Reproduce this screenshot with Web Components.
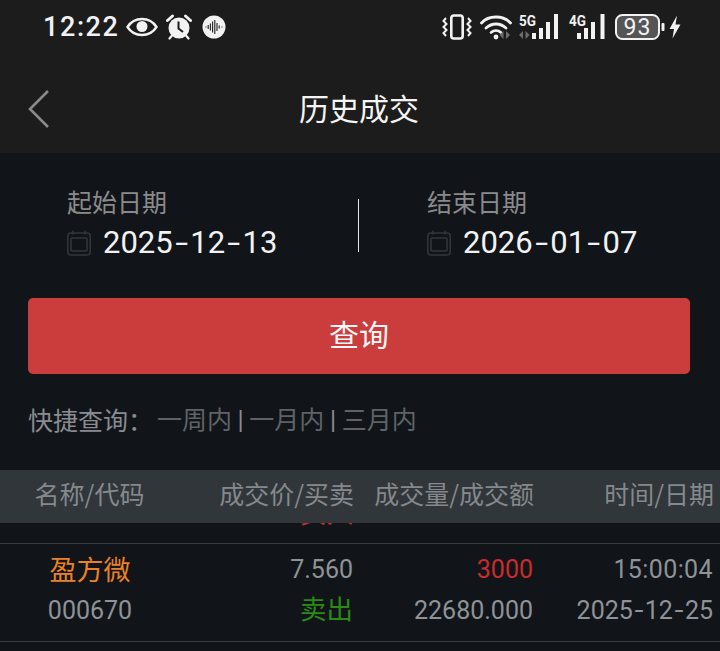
<!DOCTYPE html>
<html lang="zh">
<head>
<meta charset="utf-8">
<title>历史成交</title>
<style>
  html, body { margin: 0; height: 100%; background: #111519; overflow: hidden; }
  body { font-family: Roboto, "Noto Sans CJK SC", sans-serif; }
</style>
</head>
<body>
<history-page>
  <status-bar slot="status"></status-bar>
  <nav-bar slot="nav">历史成交</nav-bar>
  <date-range slot="range"></date-range>
  <query-button slot="query">查询</query-button>
  <quick-range slot="quick"></quick-range>
  <trade-table slot="table">
    <trade-row cut side="买入" side-color="#c92c2c"></trade-row>
    <trade-row name="盈方微" code="000670" price="7.560" side="卖出" side-color="#2b8a16"
      volume="3000" amount="22680.000" time="15:00:04" date="2025-12-25"></trade-row>
  </trade-table>
</history-page>

<script>
// dates use a wide dash in the app's font, so the hyphen gets its own box
const dashed = (text) => text.replace(/-/g, '<span class="dash">-</span>');

class HistoryPage extends HTMLElement {
  constructor() {
    super();
    this.attachShadow({ mode: "open" }).innerHTML = `
      <style>
        :host { display: flex; flex-direction: column; height: 651px; background: #111519; }
        header { background: #1c1c1c; height: 153px; display: flex; flex-direction: column; }
        main { flex: 1; min-height: 0; display: flex; flex-direction: column; }
      </style>
      <header><slot name="status"></slot><slot name="nav"></slot></header>
      <main>
        <slot name="range"></slot>
        <slot name="query"></slot>
        <slot name="quick"></slot>
        <slot name="table"></slot>
      </main>`;
  }
}

class StatusBar extends HTMLElement {
  constructor() {
    super();
    this.attachShadow({ mode: "open" }).innerHTML = `
      <style>
        :host { display: flex; align-items: center; height: 54px; padding: 0 39px 0 43px; color: #f2f2f2; }
        .time { font: 500 27px/1 Roboto, sans-serif; letter-spacing: 1.6px; margin-right: 6px; }
        .left, .right { display: flex; align-items: center; }
        .right { margin-left: auto; }
        svg { display: block; flex: none; }
      </style>
      <div class="left">
        <span class="time">12:22</span>
        <svg width="32" height="20" viewBox="0 0 32 20" style="margin-right:8px">
          <path d="M1.5 10C5 4.500 10 2 16 2s11 2.500 14.500 8C27 15.500 22 18 16 18S5 15.500 1.500 10z" fill="none" stroke="#f2f2f2" stroke-width="2.400"/>
          <circle cx="16" cy="9.500" r="5.500" fill="#f2f2f2"/>
        </svg>
        <svg width="26" height="26" viewBox="0 0 26 26" style="margin-right:10px">
          <circle cx="13" cy="14" r="10.500" fill="#f2f2f2"/>
          <path d="M12.500 7.500v7l4.500 3.500" fill="none" stroke="#1c1c1c" stroke-width="2"/>
          <path d="M1.500 6.500 6.500 2M24.500 6.500 19.500 2" stroke="#f2f2f2" stroke-width="3" stroke-linecap="round"/>
          <path d="M6 21.500 3.500 24.500M20 21.500 22.500 24.500" stroke="#f2f2f2" stroke-width="2.200" stroke-linecap="round"/>
        </svg>
        <svg width="24" height="24" viewBox="0 0 24 24">
          <circle cx="12" cy="12" r="11.500" fill="#f2f2f2"/>
          <path d="M3.500 12h1M6.200 10v4M8.400 8.500v7M10.600 6.500v11M12.800 5v14M15 8v8M17.200 10.500v3M19.500 12h1" stroke="#1c1c1c" stroke-width="1.100"/>
        </svg>
      </div>
      <div class="right">
        <svg width="30" height="26" viewBox="0 0 30 26" style="margin-right:8px">
          <rect x="9.300" y="1.500" width="11.400" height="23" rx="2.500" fill="none" stroke="#f2f2f2" stroke-width="2.600"/>
          <path d="M4 4 1.500 7 4.500 10 1.500 13 4.500 16 1.500 19 4 22M26 4 28.500 7 25.500 10 28.500 13 25.500 16 28.500 19 26 22" fill="none" stroke="#f2f2f2" stroke-width="2"/>
        </svg>
        <svg width="33" height="26" viewBox="0 0 33 26" style="margin-right:6px">
          <path d="M1.500 9C5 5 10 3 16 3s11 2 14.500 6" fill="none" stroke="#f2f2f2" stroke-width="2.800" stroke-linecap="round"/>
          <path d="M6 14c3-2.600 6.200-4 10-4s7 1.400 10 4" fill="none" stroke="#f2f2f2" stroke-width="2.800" stroke-linecap="round"/>
          <path d="M11 18.500c1.500-1.300 3-2 5-2s3.500.7 5 2" fill="none" stroke="#f2f2f2" stroke-width="2.600" stroke-linecap="round"/>
          <circle cx="16" cy="23" r="2.400" fill="#f2f2f2"/>
          <path d="M23.500 25v-8l-4 4zM26 17v8l4-4z" fill="#6d6d6d"/>
        </svg>
        <svg width="42" height="28" viewBox="0 0 42 28" style="margin-right:8px">
          <text x="0" y="13" font-family="Roboto, sans-serif" font-weight="700" font-size="15" fill="#f2f2f2" textLength="17" lengthAdjust="spacingAndGlyphs">5G</text>
          <path d="M4 26v-8l-4 4zM6.500 18v8l4-4z" fill="#6d6d6d"/>
          <rect x="13" y="20" width="4" height="6" fill="#f2f2f2"/>
          <rect x="20" y="15" width="4" height="11" fill="#f2f2f2"/>
          <rect x="27" y="9" width="4" height="17" fill="#f2f2f2"/>
          <rect x="35" y="1" width="4" height="25" fill="#f2f2f2"/>
        </svg>
        <svg width="37" height="28" viewBox="0 0 37 28" style="margin-right:9px">
          <text x="0" y="13" font-family="Roboto, sans-serif" font-weight="700" font-size="15" fill="#f2f2f2" textLength="17" lengthAdjust="spacingAndGlyphs">4G</text>
          <rect x="8" y="20" width="4" height="6" fill="#f2f2f2"/>
          <rect x="15" y="15" width="4" height="11" fill="#f2f2f2"/>
          <rect x="22" y="9" width="4" height="17" fill="#f2f2f2"/>
          <rect x="31.500" y="1" width="4" height="25" fill="#f2f2f2"/>
        </svg>
        <svg width="50" height="26" viewBox="0 0 50 26" style="margin-right:4px">
          <rect x="1" y="1" width="43" height="24" rx="6.500" fill="#555" stroke="#f2f2f2" stroke-width="2"/>
          <text x="22.500" y="20.500" text-anchor="middle" font-family="Roboto, sans-serif" font-size="23" letter-spacing="1" fill="#f2f2f2">93</text>
          <rect x="46.500" y="9" width="3" height="8" rx="1" fill="#f2f2f2"/>
        </svg>
        <svg width="12" height="24" viewBox="0 0 12 24">
          <path d="M8 .5 .5 14H5L3.500 23.500 11.500 9.500H6.500z" fill="#f2f2f2"/>
        </svg>
      </div>`;
  }
}

class NavBar extends HTMLElement {
  constructor() {
    super();
    this.attachShadow({ mode: "open" }).innerHTML = `
      <style>
        :host { display: grid; grid-template-columns: 1fr auto 1fr; align-items: center; flex: 1; padding-top: 10px; }
        svg { display: block; margin-left: 27px; }
        .title { font: 400 30px/1 "Noto Sans CJK SC", sans-serif; color: #f4f4f4; margin: 0 2px 4px 0; }
      </style>
      <svg width="23" height="40" viewBox="0 0 23 40"><path d="M21 2 3 20l18 18" fill="none" stroke="#8a8a8a" stroke-width="2.600"/></svg>
      <div class="title"><slot></slot></div>
      <span></span>`;
  }
}

class DateRange extends HTMLElement {
  constructor() {
    super();
    this.attachShadow({ mode: "open" }).innerHTML = `
      <style>
        :host { display: grid; grid-template-columns: 358px 1px 1fr; padding-top: 31px; height: 113px; box-sizing: border-box; }
        .line { background: #e8e8e8; height: 53px; margin-top: 15px; }
        date-field.a { margin-left: 67px; }
        date-field.b { margin-left: 68px; }
      </style>
      <date-field class="a" label="起始日期" value="2025-12-13"></date-field>
      <div class="line"></div>
      <date-field class="b" label="结束日期" value="2026-01-07"></date-field>`;
  }
}

class DateField extends HTMLElement {
  constructor() {
    super();
    this.attachShadow({ mode: "open" }).innerHTML = `
      <style>
        :host { display: block; }
        .label { font: 400 25px/34px "Noto Sans CJK SC", sans-serif; color: #8a8a8a; }
        .row { display: flex; align-items: center; gap: 12px; margin-top: 7px; height: 36px; }
        .value { font: 400 31px/36px Roboto, sans-serif; color: #f2f2f2; }
        .dash { display: inline-block; width: 17.500px; text-align: center; transform: scaleX(1.5); }
        svg { display: block; flex: none; }
      </style>
      <div class="label"></div>
      <div class="row">
        <svg width="24" height="26" viewBox="0 0 24 26">
          <rect x=".8" y="3" width="22.400" height="22" rx="3" fill="none" stroke="#33373c" stroke-width="1.500"/>
          <rect x="4" y="8" width="16" height="13" rx="1" fill="none" stroke="#33373c" stroke-width="1.500"/>
          <path d="M6 .5v4M18 .5v4" stroke="#33373c" stroke-width="1.500"/>
        </svg>
        <span class="value"></span>
      </div>`;
  }
  connectedCallback() {
    this.shadowRoot.querySelector(".label").textContent = this.getAttribute("label");
    this.shadowRoot.querySelector(".value").innerHTML = dashed(this.getAttribute("value"));
  }
}

class QueryButton extends HTMLElement {
  constructor() {
    super();
    this.attachShadow({ mode: "open" }).innerHTML = `
      <style>
        :host { display: block; margin: 32px 30px 0 28px; }
        button {
          display: block; width: 100%; height: 76px; border: 0; border-radius: 5px; padding: 0 0 7px;
          background: #cb3d3d; color: #f6f6f6; font: 400 30px/1 "Noto Sans CJK SC", sans-serif;
        }
      </style>
      <button><slot></slot></button>`;
  }
}

class QuickRange extends HTMLElement {
  constructor() {
    super();
    this.attachShadow({ mode: "open" }).innerHTML = `
      <style>
        :host { display: flex; align-items: center; height: 34px; margin: 28px 0 0 28px; font: 400 25px/34px "Noto Sans CJK SC", sans-serif; }
        .tag { color: #8a8c8f; width: 129px; }
        .links { color: #5f6367; }
        .sep { color: #8a8c8f; font-family: Roboto, sans-serif; }
      </style>
      <span class="tag">快捷查询：</span>
      <span class="links">一周内 <span class="sep">|</span> 一月内 <span class="sep">|</span> 三月内</span>`;
  }
}

class TradeTable extends HTMLElement {
  constructor() {
    super();
    this.attachShadow({ mode: "open" }).innerHTML = `
      <style>
        :host { display: flex; flex-direction: column; flex: 1; min-height: 0; margin-top: 34px; }
        .head {
          display: grid; grid-template-columns: 180px 174px 180px 180px; align-items: center;
          height: 53px; padding-bottom: 6px; box-sizing: border-box; background: #30363a; color: #85898c;
          font: 400 25px/1 "Noto Sans CJK SC", sans-serif; text-align: right; white-space: nowrap;
        }
        .head span:first-child { margin-left: -1px; text-align: center; }
        .body { flex: 1; min-height: 0; overflow: hidden; }
      </style>
      <div class="head"><span>名称/代码</span><span>成交价/买卖</span><span>成交量/成交额</span><span>时间/日期</span></div>
      <div class="body"><slot></slot></div>`;
  }
}

class TradeRow extends HTMLElement {
  constructor() {
    super();
    this.attachShadow({ mode: "open" }).innerHTML = `
      <style>
        :host {
          display: grid; grid-template-columns: 180px 173px 180px 180px; grid-template-rows: 41px 41px;
          align-content: start; padding-top: 5px; box-sizing: border-box; height: 98px;
          border-bottom: 1px solid #3a3d40;
          font: 400 25px/41px Roboto, "Noto Sans CJK SC", sans-serif; color: #8f9296; text-align: right;
        }
        :host([cut]) { margin-top: -77px; }
        :host([cut]) .side { line-height: 40px; }
        div { white-space: nowrap; }
        .name { text-align: center; color: #ea8127; font: 400 27px/39px "Noto Sans CJK SC", sans-serif; }
        .code { text-align: center; }
        .side { font: 400 26.500px/36px "Noto Sans CJK SC", sans-serif; }
        .vol { color: #c92c2c; }
        .time { letter-spacing: .4px; }
        .dash { display: inline-block; width: 12px; text-align: center; transform: scaleX(1.3); }
      </style>
      <div class="name"></div><div class="price"></div><div class="vol"></div><div class="time"></div>
      <div class="code"></div><div class="side"></div><div class="amount"></div><div class="date"></div>`;
  }
  connectedCallback() {
    for (const key of ["name", "code", "price", "side", "amount", "time"]) {
      this.shadowRoot.querySelector("." + key).textContent = this.getAttribute(key) || "";
    }
    this.shadowRoot.querySelector(".vol").textContent = this.getAttribute("volume") || "";
    this.shadowRoot.querySelector(".date").innerHTML = dashed(this.getAttribute("date") || "");
    this.shadowRoot.querySelector(".side").style.color = this.getAttribute("side-color");
  }
}

customElements.define("history-page", HistoryPage);
customElements.define("status-bar", StatusBar);
customElements.define("nav-bar", NavBar);
customElements.define("date-range", DateRange);
customElements.define("date-field", DateField);
customElements.define("query-button", QueryButton);
customElements.define("quick-range", QuickRange);
customElements.define("trade-table", TradeTable);
customElements.define("trade-row", TradeRow);
</script>
</body>
</html>
